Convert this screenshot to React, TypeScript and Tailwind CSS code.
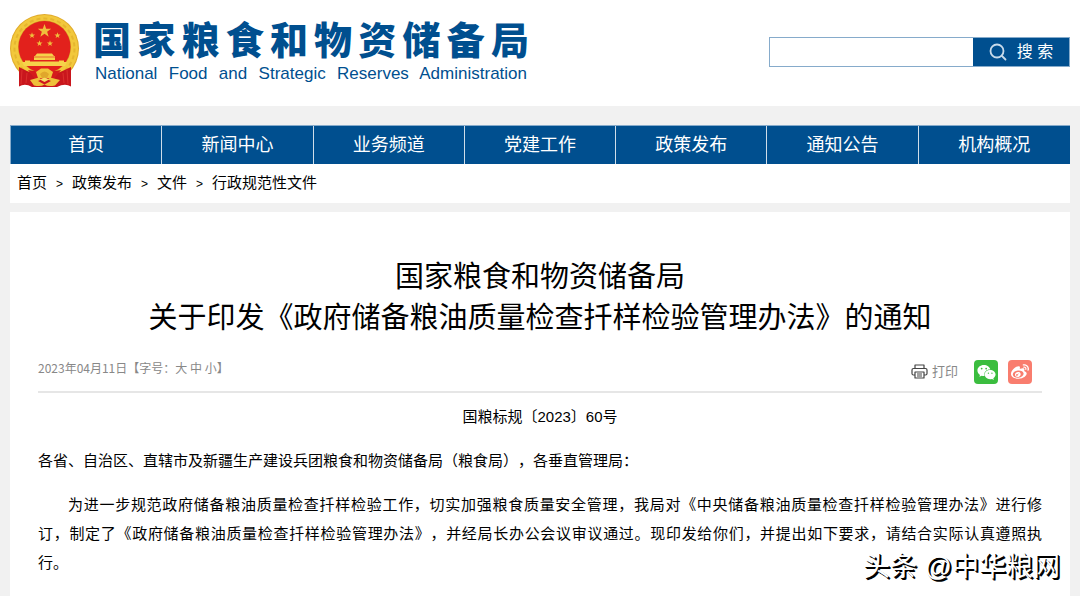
import { FaWeixin, FaWeibo } from "react-icons/fa";

interface Crumb {
  id: number;
  label: string;
}

const navItems = [
  "首页",
  "新闻中心",
  "业务频道",
  "党建工作",
  "政策发布",
  "通知公告",
  "机构概况",
];

const crumbs: Crumb[] = [
  { id: 1, label: "首页" },
  { id: 2, label: "政策发布" },
  { id: 3, label: "文件" },
  { id: 4, label: "行政规范性文件" },
];

const Star = ({ x, y, r }: { x: number; y: number; r: number }) => (
  <polygon
    fill="#efbf3c"
    points="0,-10 2.4,-3.2 9.5,-3.1 3.8,1.2 5.9,8.1 0,4 -5.9,8.1 -3.8,1.2 -9.5,-3.1 -2.4,-3.2"
    transform={`translate(${x} ${y}) scale(${r / 10})`}
  />
);

const Emblem = () => (
  <svg viewBox="0 0 70 76" className="h-[76px] w-[70px] shrink-0" aria-hidden="true">
    <circle cx="34.5" cy="34.5" r="34.5" fill="#e0aa2a" />
    <circle cx="34.5" cy="34.5" r="33.5" fill="#f2c83c" />
    <circle cx="34.5" cy="34.5" r="30" fill="none" stroke="#e6b62f" strokeWidth="2" strokeDasharray="4 3" />
    <circle cx="34.5" cy="33" r="26.5" fill="#d99e28" />
    <circle cx="34.5" cy="33" r="26" fill="#e2211c" />
    <Star x={34.5} y={17} r={7} />
    <Star x={22} y={21.5} r={3.2} />
    <Star x={47.5} y={21.5} r={3.2} />
    <Star x={29.5} y={29.5} r={3.2} />
    <Star x={40} y={29.5} r={3.2} />
    {/* gate */}
    <path d="M27 39.5 h15 l2 2.5 h1 v4 h-21 v-4 h1 z" fill="#f6d24a" />
    <path d="M24 43 h21" stroke="#e2211c" strokeWidth="0.6" />
    <path d="M15 46.5 h5 v1 h29 v-1 h5 v1.5 h3 l-2 4 h-41 l-2 -4 h3 z" fill="#f6d24a" />
    {/* ribbon and cog */}
    <path d="M9 53 Q16 57 25 60 L45 60 Q53 57 61 53 V72.5 Q55 69 47 73 H22 Q15 69 9 72.5 Z" fill="#c9161d" />
    <path d="M18 56 Q34 59 51 56 L43 66 H26 z" fill="#d51b1c" />
    <path d="M12 56 L11 70 M57 56 L58 70 M17 59 L16 69 M53 59 L54 69" stroke="#e03530" strokeWidth="0.8" fill="none" />
    <path d="M26 58 L31 54.5 H38 L43 58 L41 64 H28 z" fill="#f0c43a" />
    <path d="M30 60 Q34.5 55 39 60 L37 64 H32 z" fill="#e0a72b" />
    <path d="M20 66 L29 63.5 Q34.5 69 40 63.5 L50 66 L45 71.5 Q38 73 34.5 70.5 Q31 73 24 71.5 z" fill="#efc03a" />
    <path d="M28 67 Q34.5 63 41 67 L34.5 70.5 z" fill="#cf171c" />
    <path d="M30 65.5 Q34.5 62 39 65.5 L34.5 68 z" fill="#f8dc66" />
  </svg>
);

const SearchIcon = () => (
  <svg viewBox="0 0 18 18" className="h-[18px] w-[18px]" fill="none" stroke="#c8dbeb" strokeWidth="1.8" strokeLinecap="round">
    <circle cx="8" cy="8" r="6.5" />
    <path d="M13 13 L16.5 16.5" />
  </svg>
);

const PrintIcon = () => (
  <svg viewBox="0 0 17 15" className="h-[15px] w-[17px]" fill="none" stroke="#444" strokeWidth="1.2" strokeLinejoin="round">
    <path d="M4 4.5 V1 H13 V4.5" />
    <path d="M4 11 H2.5 Q1 11 1 9.5 V6 Q1 4.5 2.5 4.5 H14.5 Q16 4.5 16 6 V9.5 Q16 11 14.5 11 H13" />
    <path d="M4 8 H13 V14 H4 Z M6 10 H11 M6 12 H11" />
  </svg>
);

const Header = () => (
  <header className="flex items-start justify-between bg-white px-[10px] pb-4 pt-[14px]">
    <div className="flex">
      <Emblem />
      <div className="ml-[13px] mt-[5px] w-[436px] text-[#004f8f]">
        <div className="text-[38px] font-black leading-[45px] [text-align-last:justify]">
          国家粮食和物资储备局
        </div>
        <div className="px-[2px] text-[17px] leading-[20px] [text-align-last:justify]">
          National Food and Strategic Reserves Administration
        </div>
      </div>
    </div>
    <form className="mt-[23px] flex h-[30px] border border-[#86abcb]" onSubmit={(e) => e.preventDefault()}>
      <input type="text" aria-label="搜索" className="w-[203px] bg-white px-2 text-sm outline-none" />
      <button type="submit" className="flex w-24 items-center justify-center gap-[10px] bg-[#004f8f] text-base text-white">
        <SearchIcon />
        搜 索
      </button>
    </form>
  </header>
);

const Nav = () => (
  <nav className="grid grid-cols-7 border-l border-t border-[#86abcb] bg-[#004f8f]">
    {navItems.map((item) => (
      <a
        key={item}
        href="#"
        className="border-r border-[#cfdde9] text-center text-[18px] leading-[38px] text-white last:border-r-0"
      >
        {item}
      </a>
    ))}
  </nav>
);

const Breadcrumb = () => (
  <div className="flex h-[39px] items-center gap-[9px] bg-white px-[7px] text-[15px]">
    {crumbs.map((crumb, index) => (
      <div key={crumb.id} className="flex items-center gap-[9px]">
        {index > 0 && <span className="text-xs">&gt;</span>}
        <a href="#">{crumb.label}</a>
      </div>
    ))}
  </div>
);

const MetaRow = () => (
  <div className="mt-[17px] flex h-[37px] items-start justify-between border-b-2 border-[#e6e6e6] text-xs text-[#888]">
    <div className="flex pt-1 font-['Noto_Sans_CJK_SC',sans-serif]">
      <span>2023年04月11日</span>
      <span>
        【字号：<a href="#">大</a> <a href="#">中</a> <a href="#">小</a>】
      </span>
    </div>
    <div className="flex items-center pr-[10px] pt-1">
      <button type="button" className="flex items-center gap-1 text-[13px]">
        <PrintIcon />
        打印
      </button>
      <button type="button" aria-label="微信" className="ml-4 flex h-6 w-6 items-center justify-center rounded-sm bg-[#3bbd3f] text-white">
        <FaWeixin size={19} />
      </button>
      <button type="button" aria-label="微博" className="ml-[10px] flex h-6 w-6 items-center justify-center rounded-sm bg-[#f97d6e] text-white">
        <FaWeibo size={18} />
      </button>
    </div>
  </div>
);

const App = () => {
  return (
    <div className="min-h-screen bg-[#f1f1f1] font-['Liberation_Sans','Noto_Sans_CJK_SC',sans-serif] text-black [text-spacing-trim:space-all]" lang="zh-CN">
      <Header />
      <main className="px-[10px] pt-[19px]">
        <Nav />
        <Breadcrumb />
        <article className="relative mt-[9px] bg-white px-7 pb-5 pt-[45px]">
          <h1 className="text-center text-[29px] leading-[41px]">
            国家粮食和物资储备局
            <br />
            关于印发《政府储备粮油质量检查扦样检验管理办法》的通知
          </h1>
          <MetaRow />
          <div className="text-[15px] leading-[29px]">
            <p className="mt-[9px] text-center">国粮标规〔2023〕60号</p>
            <p className="mt-[15px]">
              各省、自治区、直辖市及新疆生产建设兵团粮食和物资储备局（粮食局），各垂直管理局：
            </p>
            <p className="mt-[15px]">
              <span className="block pl-[30px] [text-align-last:justify]">
                为进一步规范政府储备粮油质量检查扦样检验工作，切实加强粮食质量安全管理，我局对《中央储备粮油质量检查扦样检验管理办法》进行修
              </span>
              <span className="block [text-align-last:justify]">
                订，制定了《政府储备粮油质量检查扦样检验管理办法》，并经局长办公会议审议通过。现印发给你们，并提出如下要求，请结合实际认真遵照执
              </span>
              <span className="block">行。</span>
            </p>
          </div>
          <div className="absolute bottom-[10px] right-[10px] text-[27px] leading-[40px] text-white [text-shadow:1px_1px_0_#000,2px_2px_0_#000]">
            头条 @中华粮网
          </div>
        </article>
      </main>
    </div>
  );
};

export default App;
